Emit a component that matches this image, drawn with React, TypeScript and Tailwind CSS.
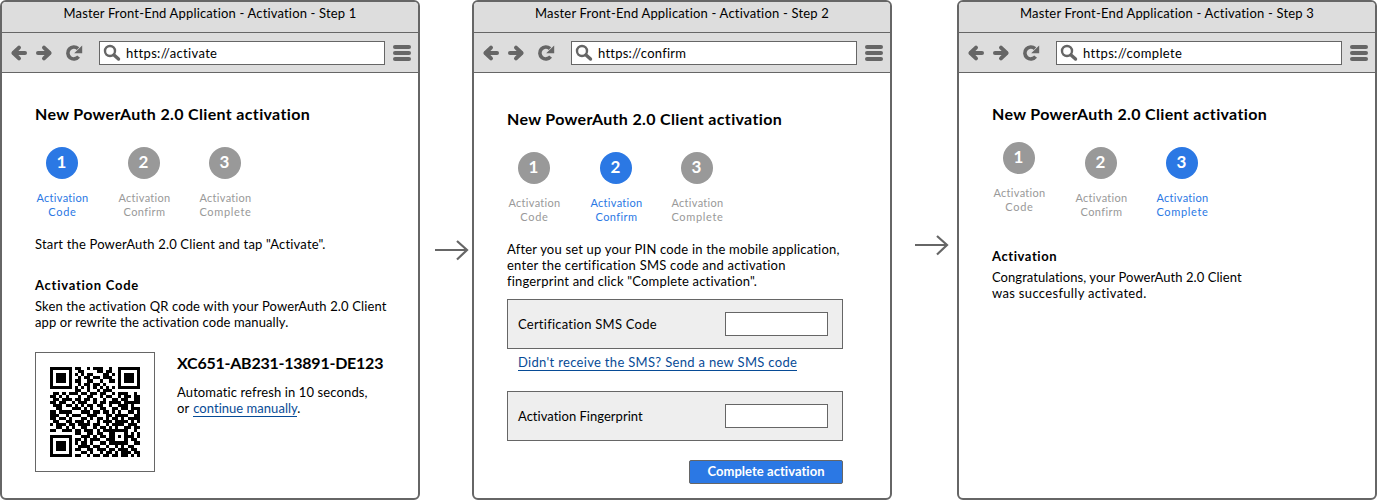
import type { ReactNode } from "react";

function Line({ className, children }: { className: string; children: ReactNode }) {
  return <span className={"block w-fit whitespace-pre " + className}>{children}</span>;
}

const body = "text-[13px] leading-[16px] text-black ";

function NavArrow({ flip = false }: { flip?: boolean }) {
  return (
    <svg viewBox="0 0 18 18" className={flip ? "size-[18px] -scale-x-100" : "size-[18px]"} fill="none" stroke="#666" strokeWidth="4" strokeLinecap="round" strokeLinejoin="round">
      <path d="M4 9H15" />
      <path d="M9 3.6L3.4 9L9 14.4" />
    </svg>
  );
}

interface BrowserProps {
  title: string;
  url: string;
  titleTracking: string;
  urlTracking: string;
  children: ReactNode;
}

function Browser({ title, url, titleTracking, urlTracking, children }: BrowserProps) {
  return (
    <section className="flex h-[500px] w-[420px] shrink-0 flex-col overflow-hidden rounded-[6px] border-2 border-[#666] bg-white">
      <header className="flex h-[31px] shrink-0 justify-center border-b border-[#666] bg-[#ddd] pt-[3px]">
        <Line className={body + titleTracking}>{title}</Line>
      </header>
      <nav className="flex h-[40px] shrink-0 items-center border-b border-[#666] bg-[#ddd] pl-2">
        <NavArrow />
        <span className="ml-[7px]"><NavArrow flip /></span>
        <svg viewBox="0 0 18 18" className="ml-[12px] size-[18px]" fill="none">
          <path d="M13.6 12.6A6 6 0 1 1 13 4.6" stroke="#666" strokeWidth="3.6" />
          <path d="M17.2 1.6V9.2H9.2L12 6.6Z" fill="#666" />
        </svg>
        <div className="ml-[16px] flex h-[24px] w-[286px] items-center border border-[#666] bg-white pl-[3px]">
          <svg viewBox="0 0 18 18" className="size-[18px]" fill="none" stroke="#666" strokeLinecap="round">
            <circle cx="7" cy="7" r="5" strokeWidth="2.4" />
            <path d="M11 11L15.5 15" strokeWidth="3.4" />
          </svg>
          <span className="ml-[5px]"><Line className={body + urlTracking}>{url}</Line></span>
        </div>
        <div className="ml-2 flex w-[18px] flex-col gap-[2px]">
          <i className="h-[4px] rounded-full bg-[#666]" />
          <i className="h-[4px] rounded-full bg-[#666]" />
          <i className="h-[4px] rounded-full bg-[#666]" />
        </div>
      </nav>
      <main className="flex grow flex-col pl-[33px]">{children}</main>
    </section>
  );
}

function Heading() {
  return <Line className="text-[16px] leading-[20px] font-bold tracking-[0.34px] text-black">New PowerAuth 2.0 Client activation</Line>;
}

function Step({ n, name, active, tracking }: { n: number; name: string; active: boolean; tracking: string }) {
  return (
    <div className={"flex w-[54px] flex-col items-center " + (active ? "text-[#2b78e4]" : "text-[#999]")}>
      <div className={"flex size-8 items-center justify-center rounded-full pr-px pb-[3px] text-[17px] leading-none font-bold text-white " + (active ? "bg-[#2b78e4]" : "bg-[#999]")}>{n}</div>
      <div className="mt-3 flex flex-col items-center pl-px text-[11px] leading-[14px]">
        <Line className="tracking-[0.3px]">Activation</Line>
        <Line className={tracking}>{name}</Line>
      </div>
    </div>
  );
}

function Steps({ current }: { current: number }) {
  return (
    <div className="flex">
      <div className={current === 3 ? "-mt-[5px]" : ""}><Step n={1} name="Code" active={current === 1} tracking="tracking-[0.72px]" /></div>
      <div className="ml-[28px]"><Step n={2} name="Confirm" active={current === 2} tracking="tracking-[0.42px]" /></div>
      <div className="ml-[27px]"><Step n={3} name="Complete" active={current === 3} tracking="tracking-[0.68px]" /></div>
    </div>
  );
}

const qr = [
  "11111110110010111001001111111",
  "10000010011000011011001000001",
  "10111010101011000110101011101",
  "10111010010110110111001011101",
  "10111010110011001001101011101",
  "10000010010110110100001000001",
  "11111110101010101010101111111",
  "00000000110010010111000000000",
  "01101011101101101100101110010",
  "11010100010011001011001011011",
  "01101110110110100100110110011",
  "11011001011100101101111011111",
  "01110110101011011001001110100",
  "00110001110101001100110110111",
  "11011110001110110110101001101",
  "11100101110011100011011110011",
  "11011010001101011010110101111",
  "01100110111010010111011110101",
  "10111011011110110010111101110",
  "00110101001100101101010011011",
  "11001110110111010111111110010",
  "00000000110011011001100010101",
  "11111110001110101101101011101",
  "10000010110101110011100010110",
  "10111010101101001101111110011",
  "10111010011110110010010101100",
  "10111010110011011101101110110",
  "10000010001101001011010111011",
  "11111110110010110110110110101",
];

function QrCode() {
  return (
    <div className="flex size-[120px] items-center justify-center border border-[#666] bg-white">
      <svg viewBox="0 0 29 29" className="size-[90px]" shapeRendering="crispEdges">
        {qr.flatMap((row, y) => [...row].map((c, x) => (c === "1" ? <rect key={x + "-" + y} x={x} y={y} width="1" height="1" /> : null)))}
      </svg>
    </div>
  );
}

function Arrow() {
  return (
    <svg viewBox="0 0 34 22" className="h-[22px] w-[34px]" fill="none" stroke="#666" strokeWidth="2.2">
      <path d="M0 11H32M22 2L32 11L22 20.5" />
    </svg>
  );
}

function Field({ label, tracking }: { label: string; tracking: string }) {
  return (
    <label className="flex h-[50px] w-[336px] items-center justify-between border border-[#666] bg-[#eee] pr-[14px] pl-[10px]">
      <Line className={body + tracking}>{label}</Line>
      <input className="h-[24px] w-[103px] border border-[#666] bg-white" />
    </label>
  );
}

export default function App() {
  return (
    <div className="flex h-[500px] w-[1377px] overflow-hidden bg-white font-['Lato','Liberation_Sans',sans-serif]">
      <Browser title="Master Front-End Application - Activation - Step 1" url="https://activate" titleTracking="tracking-[0.165px]" urlTracking="tracking-[0.34px]">
        <div className="mt-[31px]"><Heading /></div>
        <div className="mt-[23px]"><Steps current={1} /></div>
        <div className="mt-[17px]"><Line className={body + "tracking-[0.18px]"}>{'Start the PowerAuth 2.0 Client and tap "Activate".'}</Line></div>
        <div className="mt-[25px]"><Line className={body + "font-bold tracking-[0.75px]"}>Activation Code</Line></div>
        <div className="mt-[5px]">
          <Line className={body + "tracking-[0.14px]"}>Sken the activation QR code with your PowerAuth 2.0 Client</Line>
          <Line className={body + "tracking-[0.09px]"}>app or rewrite the activation code manually.</Line>
        </div>
        <div className="mt-[22px] flex gap-[22px]">
          <QrCode />
          <div className="pt-px">
            <Line className="text-[16px] leading-[20px] font-bold tracking-[-0.24px] text-black">XC651-AB231-13891-DE123</Line>
            <div className="mt-[11px]">
              <Line className={body + "tracking-[0.12px]"}>Automatic refresh in 10 seconds,</Line>
              <Line className={body + "tracking-[0.03px]"}>or <a className="ml-px border-b border-[#074b96] text-[#074b96]">continue manually</a>.</Line>
            </div>
          </div>
        </div>
      </Browser>

      <div className="mt-[239px] ml-[15px] w-[37px] shrink-0"><Arrow /></div>

      <Browser title="Master Front-End Application - Activation - Step 2" url="https://confirm" titleTracking="tracking-[0.185px]" urlTracking="tracking-[0.24px]">
        <div className="mt-[36px]"><Heading /></div>
        <div className="mt-[23px]"><Steps current={2} /></div>
        <div className="mt-[17px]">
          <Line className={body + "tracking-[0.19px]"}>After you set up your PIN code in the mobile application,</Line>
          <Line className={body + "tracking-[0.24px]"}>enter the certification SMS code and activation</Line>
          <Line className={body + "tracking-[0.18px]"}>fingerprint and click "Complete activation".</Line>
        </div>
        <div className="mt-[10px]"><Field label="Certification SMS Code" tracking="tracking-[0.24px]" /></div>
        <div className="mt-[6px] ml-[11px]"><Line className="border-b border-[#074b96] text-[13px] leading-[15px] tracking-[0.32px] text-[#074b96]">Didn't receive the SMS? Send a new SMS code</Line></div>
        <div className="mt-[20px]"><Field label="Activation Fingerprint" tracking="tracking-[0.02px]" /></div>
        <button className="mt-[19px] ml-[182px] flex h-[24px] w-[154px] items-center justify-center rounded-[2px] border border-[#666] bg-[#2b78e4] pb-[2px]">
          <Line className="text-[13px] leading-[16px] font-bold tracking-[0.04px] text-white">Complete activation</Line>
        </button>
      </Browser>

      <div className="mt-[234px] ml-[23px] w-[42px] shrink-0"><Arrow /></div>

      <Browser title="Master Front-End Application - Activation - Step 3" url="https://complete" titleTracking="tracking-[0.185px]" urlTracking="tracking-[0.34px]">
        <div className="mt-[31px]"><Heading /></div>
        <div className="mt-[23px]"><Steps current={3} /></div>
        <div className="mt-[29px]"><Line className={body + "font-bold tracking-[0.58px]"}>Activation</Line></div>
        <div className="mt-[5px]">
          <Line className={body + "tracking-[0.06px]"}>Congratulations, your PowerAuth 2.0 Client</Line>
          <Line className={body + "tracking-[0.33px]"}>was succesfully activated.</Line>
        </div>
      </Browser>
    </div>
  );
}
